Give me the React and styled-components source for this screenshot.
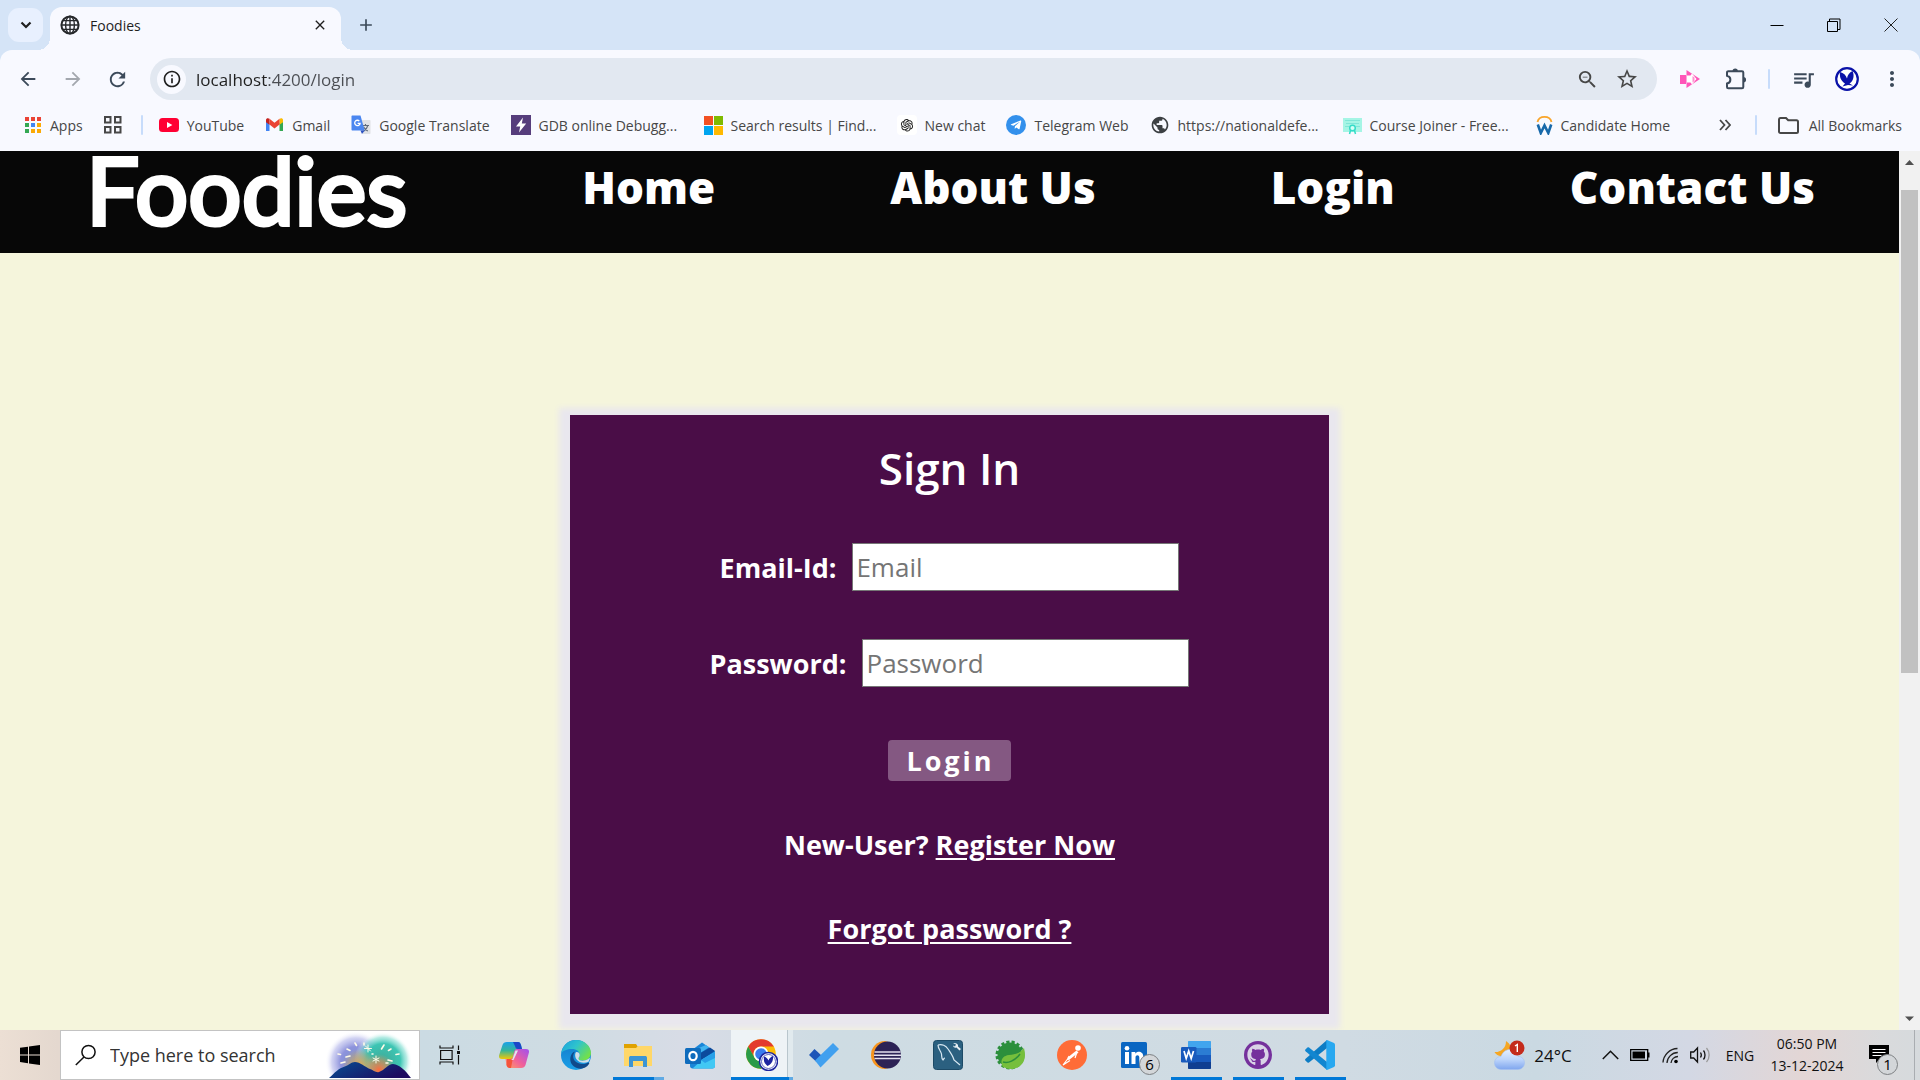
import React from "react";
import styled, { createGlobalStyle, css } from "styled-components";
import { AiOutlineOpenAI } from "react-icons/ai";
import { FaGithub, FaTelegramPlane } from "react-icons/fa";
import {
  MdArrowBack,
  MdArrowForward,
  MdRefresh,
  MdInfoOutline,
  MdZoomOut,
  MdStarOutline,
  MdQueueMusic,
  MdMoreVert,
  MdPublic,
  MdAdd,
  MdClose,
} from "react-icons/md";

const ui = `"Open Sans", "Noto Sans", sans-serif`;

const GlobalStyle = createGlobalStyle`
  *, *::before, *::after { box-sizing: border-box; }
  body { margin: 0; font-family: ${ui}; overflow: hidden; }
  button, input { font-family: inherit; }
  button { border: 0; padding: 0; background: none; color: inherit; }
  svg { display: block; flex: none; }
`;

/* ---------- browser frame ---------- */

const Screen = styled.div`
  display: flex;
  flex-direction: column;
  height: 100vh;
`;

const TabStrip = styled.header`
  display: flex;
  height: 50px;
  padding-left: 8px;
  background: #d5e4f7;
  color: #1f1f1f;
`;

const TabSearch = styled.button`
  display: grid;
  place-items: center;
  width: 35px;
  height: 34px;
  margin: 8px 7px 0 0;
  border-radius: 11px;
  background: #e8f0fe;
`;

const Tab = styled.div`
  position: relative;
  display: flex;
  align-items: center;
  gap: 10px;
  width: 291px;
  margin-top: 7px;
  padding: 0 12px 7px 10px;
  border-radius: 12px 12px 0 0;
  background: #f8f9ff;
  font-size: 14px;

  &::before,
  &::after {
    content: "";
    position: absolute;
    bottom: 0;
    width: 12px;
    height: 12px;
  }
  &::before {
    right: 100%;
    background: radial-gradient(circle at 0 0, transparent 12px, #f8f9ff 12px);
  }
  &::after {
    left: 100%;
    background: radial-gradient(circle at 100% 0, transparent 12px, #f8f9ff 12px);
  }
`;

const TabTitle = styled.span`
  flex: 1;
`;

const PlainButton = styled.button`
  display: grid;
  place-items: center;
  width: ${(p) => p.$w || 18}px;
  height: ${(p) => p.$h || 18}px;
  color: ${(p) => p.$color || "#3c4a5a"};
`;

const WindowControls = styled.div`
  display: flex;
  margin-left: auto;
  padding-right: 1px;
`;

const ToolbarWrap = styled.div`
  background: #d5e4f7;
`;

const Toolbar = styled.div`
  display: flex;
  align-items: center;
  height: 58px;
  padding: 0 5px;
  border-radius: 12px 12px 0 0;
  background: #f8f9ff;
`;

const Omnibox = styled.div`
  flex: 1;
  display: flex;
  align-items: center;
  height: 42px;
  margin: 0 10px;
  padding: 0 10px 0 7px;
  border-radius: 21px;
  background: #e2e8f1;
`;

const SiteInfo = styled.button`
  display: grid;
  place-items: center;
  width: 29px;
  height: 29px;
  margin-right: 10px;
  border-radius: 50%;
  background: #f8f9ff;
  color: #1f1f1f;
`;

const UrlInput = styled.input`
  flex: 1;
  min-width: 0;
  height: 30px;
  padding: 0;
  border: 0;
  outline: 0;
  font-size: 17px;
  background: linear-gradient(90deg, #1f1f1f 72px, #4a4d52 72px);
  background-clip: text;
  -webkit-background-clip: text;
  color: transparent;
`;

const Divider = styled.span`
  width: 2px;
  height: 20px;
  margin: ${(p) => p.$m || "0"};
  border-radius: 1px;
  background: #c7dcfb;
`;

const BookmarkBar = styled.nav`
  display: flex;
  align-items: center;
  height: 43px;
  padding: 0 18px 9px 24px;
  background: #f8f9ff;
  color: #474747;
  font-size: 14px;
  white-space: nowrap;
`;

const Bookmark = styled.a`
  display: flex;
  align-items: center;
  gap: 8px;
  margin-right: 21px;
  color: inherit;
  text-decoration: none;
  ${(p) => p.$wide && css`width: 172px;`}
`;

const BarEnd = styled.div`
  display: flex;
  align-items: center;
  gap: 21px;
  margin-left: auto;
`;

const FolderButton = styled.button`
  display: flex;
  align-items: center;
  gap: 10px;
  font-size: 14px;
`;

/* ---------- page ---------- */

const Viewport = styled.div`
  flex: 1;
  min-height: 0;
  display: flex;
`;

const Page = styled.div`
  flex: 1;
  min-width: 0;
  overflow: hidden;
  background: #f5f5dc;
`;

const SiteHeader = styled.header`
  display: flex;
  justify-content: space-between;
  align-items: flex-start;
  height: 102px;
  padding: 0 84px 0 86px;
  background: #070707;
  color: #fff;
`;

const Brand = styled.div`
  font-family: "Comic Sans MS", Lato, sans-serif;
  font-size: 94px;
  line-height: 76px;
  -webkit-text-stroke: 4px #fff;
  stroke-linejoin: round;
`;

const NavLink = styled.a`
  padding-top: 3px;
  color: #fff;
  font-size: 44px;
  font-weight: 800;
  line-height: 66px;
  text-decoration: none;
`;

const Card = styled.main`
  width: 40%;
  margin: 162px auto 0;
  padding: 25px 0 65px;
  background: #4a0d47;
  box-shadow: 0 4px 6px 11px #e9e7ee;
  color: #fff;
  text-align: center;
`;

const Title = styled.h1`
  margin: 0 0 47px;
  font-size: 44px;
  font-weight: 600;
  line-height: 56px;
`;

const Form = styled.form`
  display: flex;
  flex-direction: column;
  align-items: center;
  gap: 48px;
  font-size: 27px;
  font-weight: 700;
`;

const Field = styled.div`
  display: flex;
  align-items: center;
  gap: 16px;
`;

const TextBox = styled.input`
  width: 327px;
  height: 48px;
  padding: 1px 3px;
  border: 1px solid #767676;
  border-radius: 0;
  background: #fff;
  font-size: 26px;

  &::placeholder {
    color: #757575;
    opacity: 1;
  }
`;

const SubmitButton = styled.button`
  height: 41px;
  margin: 5px 0 0;
  padding: 0 16px 0 18px;
  border-radius: 4px;
  background: #845882;
  color: #fff;
  font-size: 27px;
  font-weight: 700;
  letter-spacing: 3px;
`;

const Note = styled.p`
  margin: 44px 0 0;
  font-size: 27px;
  font-weight: 700;
  line-height: 40px;

  a {
    color: #fff;
    text-decoration-thickness: 2px;
    text-underline-offset: 3px;
  }
`;

const Scrollbar = styled.div`
  display: flex;
  flex-direction: column;
  align-items: center;
  width: 21px;
  background: #f1f1f1;
`;

const Track = styled.div`
  flex: 1;
  width: 17px;
  display: flex;
  flex-direction: column;
  padding-top: 18px;
`;

const Thumb = styled.div`
  height: 59%;
  background: #c1c1c1;
`;

/* ---------- taskbar ---------- */

const Taskbar = styled.footer`
  display: flex;
  align-items: stretch;
  height: 50px;
  background: linear-gradient(
    90deg,
    #ecdfd4 0%,
    #e4d8cf 3%,
    #cbdbe3 22%,
    #cfdce3 30%,
    #d8dce6 36%,
    #cedce3 43%,
    #d0dbe3 70%,
    #cad9e2 80%,
    #d3d8e4 88%,
    #e3d6d5 94%,
    #d9dadc 98%,
    #d6dadd 100%
  );
  color: #101010;
`;

const StartButton = styled.button`
  display: grid;
  place-items: center;
  width: 60px;
`;

const SearchBox = styled.label`
  display: flex;
  align-items: center;
  width: 360px;
  padding: 0 5px 0 14px;
  border: 1px solid #c3c3c3;
  background: #fff;
`;

const SearchInput = styled.input`
  flex: 1;
  min-width: 0;
  margin-left: 13px;
  padding: 0;
  border: 0;
  outline: 0;
  font-size: 18px;

  &::placeholder {
    color: #333;
    opacity: 1;
  }
`;

const Apps = styled.div`
  display: flex;
  margin-left: 3px;
`;

const AppButton = styled.button`
  position: relative;
  display: grid;
  place-items: center;
  width: 62px;
  ${(p) =>
    p.$active &&
    css`
      background: linear-gradient(90deg, #eef3f6 56px, #b9c6cd 56px, #b9c6cd 57px, #e1eaee 57px);
    `}
  ${(p) =>
    p.$running &&
    css`
      &::after {
        content: "";
        position: absolute;
        bottom: 0;
        left: ${p.$active ? 0 : 6}px;
        right: ${p.$active ? 0 : 5}px;
        height: 3px;
        background: ${p.$stacked
          ? "linear-gradient(270deg, #60aae4 " + (p.$active ? 4 : 10) + "px, #0078d7 0)"
          : "#0078d7"};
      }
    `}
`;

const Badge = styled.span`
  position: absolute;
  right: ${(p) => p.$right || 5}px;
  bottom: 5px;
  width: 21px;
  height: 21px;
  border: 1px solid #7d8083;
  border-radius: 50%;
  background: #d3d6d9;
  color: #000;
  font-size: 15px;
  line-height: 19px;
  text-align: center;
`;

const Tray = styled.div`
  display: flex;
  align-items: stretch;
  margin-left: auto;
`;

const TrayButton = styled.button`
  position: relative;
  display: flex;
  align-items: center;
  justify-content: center;
  gap: 8px;
  width: ${(p) => p.$w}px;
  font-size: ${(p) => p.$size || 15}px;
`;

const Clock = styled.button`
  width: 84px;
  font-size: 14px;
  line-height: 22px;
  text-align: center;
  white-space: nowrap;
`;

const ShowDesktop = styled.button`
  width: 6px;
  border-left: 1px solid #a9adb1;
`;

/* ---------- icons ---------- */

const ChevronDownIcon = () => (
  <svg width="12" height="8" viewBox="0 0 12 8" fill="none" stroke="#1f1f1f" strokeWidth="2.200">
    <path d="M1.500 1.500L6 6l4.500-4.500" />
  </svg>
);

const GlobeIcon = () => (
  <svg width="20" height="20" viewBox="0 0 20 20" fill="none" stroke="#26282b" strokeWidth="1.4">
    <circle cx="10" cy="10" r="8.6" strokeWidth="2" />
    <ellipse cx="10" cy="10" rx="4.400" ry="8.800" />
    <path d="M10 1v18M1 10h18M2.500 5.600h15M2.500 14.400h15" />
  </svg>
);

const AppsIcon = () => {
  const colors = ["#ea4335", "#ea4335", "#ea4335", "#34a853", "#4285f4", "#fbaa05", "#34a853", "#fbaa05", "#fbaa05"];
  return (
    <svg width="18" height="18" viewBox="0 0 18 18">
      {colors.map((c, i) => (
        <rect key={i} x={1 + (i % 3) * 6} y={1 + Math.floor(i / 3) * 6} width="4" height="4" fill={c} />
      ))}
    </svg>
  );
};

const GridIcon = () => (
  <svg width="18" height="18" viewBox="0 0 18 18" fill="none" stroke="#474747" strokeWidth="2">
    <path d="M1 1h5.500v5.500H1zM11 1h5.500v5.500H11zM1 11h5.500v5.500H1zM11 11h5.500v5.500H11z" />
  </svg>
);

const YouTubeIcon = () => (
  <svg width="20" height="20" viewBox="0 0 20 20">
    <rect y="3" width="20" height="14" rx="3.500" fill="#f03" />
    <path d="M8 7l5.400 3L8 13z" fill="#fff" />
  </svg>
);

const GmailIcon = () => (
  <svg width="19" height="20" viewBox="0 0 19 20">
    <path d="M1 5v11h3.500V8z" fill="#4285f4" />
    <path d="M18 5v11h-3.500V8z" fill="#34a853" />
    <path d="M1 5c0-1.700 2-2.400 3.500-1.200v6L1 7.200z" fill="#c5221f" />
    <path d="M18 5c0-1.700-2-2.400-3.500-1.200v6L18 7.200z" fill="#fbbc04" />
    <path d="M4.500 3.800l5 4 5-4v5.600l-5 4-5-4z" fill="#ea4335" />
  </svg>
);

const TranslateIcon = () => (
  <svg width="20" height="20" viewBox="0 0 20 20">
    <path d="M8 5h10.500c.6 0 1 .4 1 1v12c0 .6-.4 1-1 1H12z" fill="#dfe1e5" />
    <path d="M11 10.500h7M14.500 9v1.500M16.800 10.500c-.6 2.500-2.300 4.500-4 5.500M12.500 11.800c.8 1.800 2.300 3.200 4.300 4.200" stroke="#5f6b7a" strokeWidth="1.100" fill="none" />
    <path d="M1.500.5h8l4.200 15H1.500c-.6 0-1-.4-1-1v-13c0-.6.400-1 1-1z" fill="#4a86f0" />
    <path d="M9.500 15.500h4.200L11 19z" fill="#2b50c0" />
    <path d="M8.300 6a2.700 2.700 0 1 0 .8 2.300H6.600" stroke="#fff" strokeWidth="1.300" fill="none" />
  </svg>
);

const GdbIcon = () => (
  <svg width="20" height="20" viewBox="0 0 20 20">
    <path d="M0 0h20v20H0z" fill="#563d7c" />
    <path d="M12 2.500L5 11.500h4.200L8 17.500l7.200-9h-4.400z" fill="#fff" />
  </svg>
);

const MicrosoftIcon = () => (
  <svg width="19" height="19" viewBox="0 0 19 19">
    <path d="M0 0h9v9H0z" fill="#f25022" />
    <path d="M10 0h9v9h-9z" fill="#7fba00" />
    <path d="M0 10h9v9H0z" fill="#00a4ef" />
    <path d="M10 10h9v9h-9z" fill="#ffb900" />
  </svg>
);

const Disc = styled.span`
  display: grid;
  place-items: center;
  width: 20px;
  height: 20px;
  border-radius: ${(p) => (p.$square ? 4 : 10)}px;
  background: ${(p) => p.$bg};
  color: ${(p) => p.$fg};
`;

const CertificateIcon = () => (
  <svg width="19" height="19" viewBox="0 0 19 19">
    <path d="M0 2h19v14H0z" fill="#a5f5e5" />
    <path d="M2 4.500h15M3 7.500h13M2 10.500h4M13 10.500h4" stroke="#7fe6d8" />
    <circle cx="9.500" cy="12" r="2.800" fill="#d5fff6" stroke="#35dcc8" strokeWidth="1.500" />
    <path d="M7.500 14.500L6.500 18M11.500 14.500l1 3.500" stroke="#35dcc8" strokeWidth="1.500" />
  </svg>
);

const CandidateIcon = () => (
  <svg width="17" height="20" viewBox="0 0 17 20" fill="none">
    <path d="M1.500 7C3 .2 14 .2 15.500 7" stroke="#f9a52b" strokeWidth="1.800" />
    <path d="M1.800 9.500l3 8.500L8.500 10.500l3.800 7.500L15.200 9.500" stroke="#1769aa" strokeWidth="2.600" />
  </svg>
);

const MoreIcon = () => (
  <svg width="12" height="12" viewBox="0 0 12 12" fill="none" stroke="#474747" strokeWidth="1.800">
    <path d="M1 1l4.500 5L1 11M6.500 1L11 6l-4.500 5" />
  </svg>
);

const FolderIcon = () => (
  <svg width="21" height="17" viewBox="0 0 21 17" fill="none" stroke="#474747" strokeWidth="2">
    <path d="M1 14.500V2.500C1 1.700 1.600 1 2.500 1H8l2.200 2.300h8.300c.9 0 1.500.7 1.500 1.500v9.700c0 .8-.6 1.500-1.500 1.500h-16C1.600 16 1 15.300 1 14.500z" />
  </svg>
);

const PuzzleIcon = () => (
  <svg width="22" height="22" viewBox="0 0 22 22">
    <path
      d="M2 7.800V4.500c0-.8.600-1.300 1.300-1.300H17c.7 0 1.300.5 1.300 1.300V19c0 .8-.6 1.300-1.300 1.300H3.300C2.600 20.300 2 19.800 2 19v-3.500c4.500-1 4.500-6.700 0-7.700z"
      fill="none"
      stroke="#3c4a5a"
      strokeWidth="2"
    />
    <path d="M7.500 3.200a2.700 2.700 0 0 1 5.400 0zM18.300 9a2.700 2.700 0 0 1 0 5.500z" fill="#3c4a5a" />
  </svg>
);

const ArrowExtensionIcon = () => (
  <svg width="22" height="22" viewBox="0 0 22 22">
    <path d="M7.500 2L21 11 7.500 20z" fill="#ff55b8" />
    <path d="M1 7h6v9H1z" fill="#ff55b8" />
    <path d="M8 7.500h3.500l1.500-2 4.500 5.500-4.500 5.500-1.500-2H8z" fill="#fff" />
    <path d="M13.500 8v6.500l2-1.500V9.500z" fill="#ff8fd0" />
  </svg>
);

const AvatarIcon = () => (
  <svg width="24" height="24" viewBox="0 0 24 24">
    <circle cx="12" cy="12" r="10.800" fill="#fff" stroke="#0a12a8" strokeWidth="2.200" />
    <path d="M5 5c3.500 1 6 3 7 6.500C12.500 8 14.500 5.500 17.500 4c2.200 4.500 1 10-3 12.500l3.500 2-5-.5-5.500 1.500 2.500-3C6 14 4.300 10 5 5z" fill="#0a12a8" />
  </svg>
);

const MinimizeIcon = () => (
  <svg width="14" height="14" viewBox="0 0 14 14" stroke="#000">
    <path d="M.5 7.500h13" />
  </svg>
);
const RestoreIcon = () => (
  <svg width="14" height="14" viewBox="0 0 14 14" stroke="#000" fill="none">
    <path d="M.5 3.500h10v10H.5zM2.500 3.500v-2.500h10.500v10.500h-2.500" />
  </svg>
);
const CloseIcon = () => (
  <svg width="14" height="14" viewBox="0 0 14 14" stroke="#222" fill="none">
    <path d="M.5.5l13 13M13.500.5l-13 13" />
  </svg>
);

const ScrollArrow = ({ down }) => (
  <svg width="21" height="21" viewBox="0 0 21 21">
    <path d={down ? "M6 7.500h9L10.500 12z" : "M6 14h9l-4.500-5z"} fill="#505050" />
  </svg>
);

const WindowsIcon = () => (
  <svg width="20" height="20" viewBox="0 0 20 20">
    <path d="M0 2.800l8-1.100v7.700H0zM9 1.500L20 0v9.400H9zM0 10.400h8v7.800l-8-1.100zM9 10.400h11V20L9 18.400z" />
  </svg>
);

const SearchIcon = () => (
  <svg width="22" height="22" viewBox="0 0 22 22" fill="none" stroke="#111" strokeWidth="1.500">
    <circle cx="13.500" cy="8" r="6.600" />
    <path d="M9 13L.8 21" />
  </svg>
);

const FireworksArt = () => (
  <svg width="88" height="46" viewBox="0 0 88 46">
    <defs>
      <radialGradient id="fwViolet">
        <stop offset="0" stopColor="#6f8fd0" />
        <stop offset=".5" stopColor="#8288d8" stopOpacity=".9" />
        <stop offset=".78" stopColor="#a5a8e6" stopOpacity=".5" />
        <stop offset="1" stopColor="#fff" stopOpacity="0" />
      </radialGradient>
      <radialGradient id="fwTeal">
        <stop offset="0" stopColor="#3fa896" />
        <stop offset=".6" stopColor="#34c3b0" stopOpacity=".95" />
        <stop offset=".82" stopColor="#7adccf" stopOpacity=".55" />
        <stop offset="1" stopColor="#fff" stopOpacity="0" />
      </radialGradient>
      <radialGradient id="fwGold">
        <stop offset="0" stopColor="#e8a848" />
        <stop offset=".6" stopColor="#c8a870" stopOpacity=".6" />
        <stop offset="1" stopColor="#c8a870" stopOpacity="0" />
      </radialGradient>
      <radialGradient id="fwEmber">
        <stop offset="0" stopColor="#ff6a3c" />
        <stop offset=".6" stopColor="#e09058" stopOpacity=".6" />
        <stop offset="1" stopColor="#c8a870" stopOpacity="0" />
      </radialGradient>
      <linearGradient id="fwHill" x2="1" y2=".4">
        <stop offset="0" stopColor="#065094" />
        <stop offset="1" stopColor="#1d0b60" />
      </linearGradient>
    </defs>
    <circle cx="30" cy="30" r="31" fill="url(#fwViolet)" />
    <circle cx="57" cy="29" r="29" fill="url(#fwTeal)" />
    <circle cx="33" cy="34" r="17" fill="url(#fwGold)" />
    <circle cx="53" cy="38" r="16" fill="url(#fwEmber)" />
    <g stroke="#fffbe8" strokeWidth="1.600" strokeLinecap="round">
      <path d="M29 11l1.500 2.500M38 13v-2M12 22l2.500.5M21 17l3 1.500M20 25l4-1M15 31l4-1M58 13l-2.500 4M65 17l-2.500 1.500M73 22l-3 .5M62 28l4 1M60 31h2M46 22h1" />
      <path d="M42 13v7M38.500 16.500h7M39.500 14l5 5M50 24v7M47 26l6 3M53 26l-6 3" strokeWidth="1" />
    </g>
    <path d="M3 46c7-6 8-9 17-12 3-1 5-4 9-4 5 0 10 5 15 7 3 1 6 4 9 3 6-2 9-8 14-8 7 1 12 6 18 14z" fill="url(#fwHill)" />
  </svg>
);

const TaskViewIcon = () => (
  <svg width="22" height="20" viewBox="0 0 22 20" fill="none" stroke="#111" strokeWidth="1.200">
    <path d="M1.600 5.500h11.500v9H1.600zM1 .5v2.500h13V.5M1 19.500V17h13v2.500M19.500.5V5M19.500 10v9.500" />
    <path d="M18 6h3v3h-3z" fill="#111" stroke="none" />
  </svg>
);

const CopilotIcon = () => (
  <svg width="30" height="28" viewBox="0 0 30 28">
    <defs>
      <linearGradient id="cpA" x2="0" y2="1">
        <stop offset="0" stopColor="#1aa0e8" />
        <stop offset=".5" stopColor="#35b59a" />
        <stop offset="1" stopColor="#f0c808" />
      </linearGradient>
      <linearGradient id="cpB" x1="1" y1="0" x2="0" y2="1">
        <stop offset="0" stopColor="#a050f0" />
        <stop offset=".55" stopColor="#f0609a" />
        <stop offset="1" stopColor="#ffa060" />
      </linearGradient>
    </defs>
    <path d="M8 1h11c2 0 2.500 1.500 3 3l1 4h-4c-2 0-3 1-3.500 3l-1.300 5c-.5 1.500-1.200 2-3.200 2H3c-2.500 0-3.500-1.500-2.800-4L3.500 4C4.200 2 5.500 1 8 1z" fill="url(#cpA)" />
    <path d="M14 1h5c2 0 2.500 1.500 3 3l1 4h-4c-2 0-2.500-1-3-3z" fill="#1b47c8" />
    <path d="M22 27H11c-2 0-3-1-3.500-3L6.500 18h4.300c2 0 2.700-.7 3.200-2.500L15.500 10c.5-1.500 1.200-2 3.500-2h8c2.500 0 3.500 1.500 2.800 4l-3.300 12c-.7 2-2 3-4.500 3z" fill="url(#cpB)" />
    <path d="M8 18h3c2 0 2.700-.7 3.200-2.500L12 27h-1c-2 0-3-1-3.500-3z" fill="#f4543c" />
    <path d="M16.500 9.500h2.500L14.500 19h-3c1.500 0 2-1 2.500-2.500z" fill="#dfe8ee" />
  </svg>
);

const EdgeIcon = () => (
  <svg width="30" height="30" viewBox="0 0 30 30">
    <defs>
      <linearGradient id="edA" x2="1" y2=".6">
        <stop offset="0" stopColor="#1a9fe0" />
        <stop offset=".5" stopColor="#2fc4cc" />
        <stop offset="1" stopColor="#72e04c" />
      </linearGradient>
      <linearGradient id="edB" x2="0" y2="1">
        <stop offset="0" stopColor="#1478c8" />
        <stop offset="1" stopColor="#1aa0e8" />
      </linearGradient>
    </defs>
    <circle cx="15" cy="15" r="15" fill="url(#edB)" />
    <path d="M.2 13.500C1.500 5 7.500 0 15 0c8.500 0 15 6 15 13 0 4.500-3.500 7.500-8 7.500-3 0-4.800-1-4.500-2.300.2-.9 1.200-1.400 1.200-3.500 0-3.300-3.300-5.700-7.700-5.700-5 0-9 1.500-10.800 4.500z" fill="url(#edA)" />
    <path d="M14 11.500c-3 4-2.500 9 3 11.500 4 1.800 8 1 10.500-.5 1 0 1 .8.300 1.800C25 28.500 20 29.500 16 28c-5-2-7.500-6-6.500-11 .5-2.500 2-4.800 4.500-5.500z" fill="#114a8b" />
    <path d="M15.500 12c2 0 3.200 1.300 3.200 3 0 1.800-1.200 2.300-1.200 3.500 0 2 3.500 2.800 7 1.800 1.500-.4 3-1.300 4.500-2.500-.3 1.500-.7 2.800-1.500 4-3.500 1.700-9.500 1.500-12-2.500-2-3-1.500-7 0-7.300z" fill="#d2dfe7" />
  </svg>
);

const ExplorerIcon = () => (
  <svg width="28" height="24" viewBox="0 0 28 24">
    <path d="M0 1h12l2 3v4H0z" fill="#e0a200" />
    <path d="M0 5h12l2-2h14v20H0z" fill="#ffd768" />
    <path d="M5 24V15c0-1.500.8-2 2-2h14c1.200 0 2 .5 2 2v9h-4v-6h-10v6z" fill="#3d95d4" />
  </svg>
);

const OutlookIcon = () => (
  <svg width="30" height="27" viewBox="0 0 30 27">
    <path d="M5 9.500L17 .5l13 9V24c0 1.500-1 2.500-2.500 2.500H7.500C6 26.500 5 25.500 5 24z" fill="#1a86d8" />
    <path d="M9 8l12-5 3 2.200L12 13z" fill="#42b4f0" />
    <path d="M12 13L25 5.500l5 3.500-14 9z" fill="#0c4a9c" />
    <path d="M30 10v14c0 1.500-1 2.500-2.500 2.500H7.500L18 17z" fill="#42c8f4" />
    <path d="M30 10v6l-10 5-4-3z" fill="#28a0e8" />
    <rect y="6" width="16" height="16" rx="1.500" fill="#0f6cbd" />
    <ellipse cx="8" cy="14" rx="3.700" ry="4.200" fill="none" stroke="#fff" strokeWidth="2.200" />
  </svg>
);

const ChromeIcon = () => (
  <svg width="32" height="32" viewBox="0 0 32 32">
    <circle cx="15" cy="15" r="14.800" fill="#fbbc04" />
    <path d="M2.200 7.500A14.800 14.800 0 0 1 27.800 7.500H15A7.500 7.500 0 0 0 8.500 18.800z" fill="#e33b2e" />
    <path d="M2.200 7.500L8.600 18.700A7.500 7.500 0 0 0 21 19.500L15 29.800A14.800 14.800 0 0 1 2.200 7.500z" fill="#2a9b48" />
    <circle cx="15" cy="15" r="7.500" fill="#fff" />
    <circle cx="15" cy="15" r="5.800" fill="#3b7ded" />
    <circle cx="22.500" cy="22.500" r="9" fill="#fff" stroke="#1d25a0" strokeWidth="1.500" />
    <circle cx="22.500" cy="22.500" r="7" fill="none" stroke="#3a42b0" strokeWidth=".8" />
    <path d="M18 17.500c2 .5 3.500 2 4.500 4 .7-2 2-3.500 4.500-4.500.5 4-1 7-3 8.500l-2.500 1.500-1.500-1.500c-2-1.500-2.500-4.500-2-8z" fill="#1d25a0" />
  </svg>
);

const TodoIcon = () => (
  <svg width="30" height="26" viewBox="0 0 30 26">
    <path d="M0 13l5.500-6 7 6.500-5 6.500z" fill="#1e55b8" />
    <path d="M6 18.500L24 1l6 6-18.500 18.500z" fill="#41a0ef" />
  </svg>
);

const EclipseIcon = () => (
  <svg width="30" height="28" viewBox="0 0 30 28">
    <path d="M14 0a14 14 0 0 0 0 28l3-1V1z" fill="#f7941e" />
    <circle cx="16.500" cy="14" r="13.500" fill="#2c2255" />
    <path d="M3.500 11h26M3 14.300h27M3.500 17.500h26" stroke="#e4e0ee" strokeWidth="1.600" />
  </svg>
);

const MysqlIcon = () => (
  <svg width="30" height="30" viewBox="0 0 30 30" fill="none">
    <rect x=".5" y=".5" width="29" height="29" rx="3" fill="#2b6080" stroke="#1d4a66" />
    <path d="M5 5c4-1.500 8 1 10 4 3 4.500 5 7 6 11l6 5M5 5c0 4 3 6 3.500 9 .3 3 0 5 1.500 6 1-1 .8-2 2-2" stroke="#d8e8f2" strokeWidth="1.200" />
    <path d="M20 3l3 1.500-1 2-2-1c.5 2 2 2.500 3.500 2l3 3 1.500-1.500-3-2.500c.5-2-1-3.500-5-3.500z" fill="#e8f0f4" />
  </svg>
);

const SpringIcon = () => (
  <svg width="30" height="30" viewBox="0 0 30 30">
    <circle cx="15" cy="15" r="12.500" fill="none" stroke="#2c8f3c" strokeWidth="4" strokeDasharray="3 2" />
    <circle cx="15" cy="15" r="12.500" fill="#2c8f3c" />
    <path d="M29 8c2 8 1 14-4 18-5 3.500-11 4-17 1C5 22 6 16 14 15c7-.5 11-2 15-7z" fill="#76bf3c" />
    <path d="M8 22c5 1.500 12-1 17-8" stroke="#2c8f3c" strokeWidth="1.500" fill="none" />
  </svg>
);

const PostmanIcon = () => (
  <svg width="30" height="30" viewBox="0 0 30 30">
    <circle cx="15" cy="15" r="15" fill="#ff6c37" />
    <circle cx="21" cy="8" r="2.800" fill="#fff" />
    <path d="M19.500 10.500L10 18l2 2 9.500-7.500z" fill="#fff" />
    <path d="M11 18.500L6 25l7-4.500M12 16l-1 4M20 12l-2 6" stroke="#fff" strokeWidth="1.200" fill="none" />
  </svg>
);

const LinkedInIcon = () => (
  <svg width="26" height="26" viewBox="0 0 26 26" fill="#fff">
    <rect width="26" height="26" rx="1.500" fill="#0a66c2" />
    <circle cx="6" cy="6.300" r="2.300" />
    <path d="M4 10h4v12H4zM10.500 10h3.800v1.700c2-3 8-2.700 8 3V22h-4v-6.500c0-3-3.800-2.800-3.800 0V22h-4z" />
  </svg>
);

const WordIcon = () => (
  <svg width="30" height="28" viewBox="0 0 30 28">
    <path d="M7 1c0-.6.400-1 1-1h21c.6 0 1 .4 1 1v6H7z" fill="#41a5ee" />
    <path d="M7 7h23v7H7z" fill="#2b7cd3" />
    <path d="M7 14h23v7H7z" fill="#185abd" />
    <path d="M7 21h23v6c0 .6-.4 1-1 1H8c-.6 0-1-.4-1-1z" fill="#103f91" />
    <rect x="0" y="6" width="15.500" height="15.500" rx="1.300" fill="#185abd" />
    <path d="M3 10l2.200 7.500L7.700 10l2.500 7.500L12.500 10" stroke="#fff" strokeWidth="1.700" fill="none" />
  </svg>
);

const GithubDisc = styled.span`
  display: grid;
  place-items: center;
  width: 28px;
  height: 28px;
  border-radius: 50%;
  background: #75309c;
  color: #d9d3e6;
`;

const VscodeIcon = () => (
  <svg width="30" height="30" viewBox="0 0 30 30">
    <path d="M22 0v8L4 22.500c-.6.400-1 .4-1.500 0L.6 20.800c-.7-.7-.7-1.300 0-2z" fill="#0d7cc4" />
    <path d="M22 30v-8L4 7.500c-.6-.4-1-.4-1.500 0L.6 9.200c-.7.700-.7 1.300 0 2z" fill="#1286d0" />
    <path d="M22 0l7 3c.7.400 1 1 1 1.700v20.600c0 .7-.3 1.300-1 1.700l-7 3c-.5-.3-.7-.8-.7-1.500v-27c0-.7.200-1.200.7-1.500z" fill="#28a8f0" />
  </svg>
);

const WeatherIcon = () => (
  <svg width="32" height="30" viewBox="0 0 32 30">
    <defs>
      <linearGradient id="cloud" x2="0" y2="1">
        <stop offset="0" stopColor="#e6f0ff" />
        <stop offset=".5" stopColor="#bdd5fb" />
        <stop offset="1" stopColor="#7fa6ee" />
      </linearGradient>
    </defs>
    <path d="M12 1c1.500 1 4 3 5 6l-3 5-7 4c-2.500 0-5-1.500-6.500-4C6 12.500 12 9 12 1z" fill="#f5a623" />
    <path d="M7.500 29.500c-4 0-7-2.800-7-6.500s2.800-6.500 6.500-6.500C8.500 12 12 9.500 16 9.500c4.500 0 7.500 3 8 7 4 0 6.500 2.800 6.500 6.300 0 4-3 6.700-7 6.700z" fill="url(#cloud)" stroke="#a3c0f2" strokeWidth=".6" />
    <circle cx="23" cy="8" r="7.500" fill="#c42b1c" />
    <path d="M21 6l2.300-1.500V12" stroke="#fff" strokeWidth="1.400" fill="none" />
  </svg>
);

const ChevronUpIcon = () => (
  <svg width="17" height="10" viewBox="0 0 17 10" fill="none" stroke="#111" strokeWidth="1.500">
    <path d="M.8 9l7.700-7.700L16.200 9" />
  </svg>
);
const BatteryIcon = () => (
  <svg width="20" height="12" viewBox="0 0 20 12">
    <path d="M.7.700h17v10.600H.7z" fill="none" stroke="#000" strokeWidth="1.300" />
    <path d="M2.500 2.500h12.500v7H2.500zM18 3.500h1.500v5H18z" />
  </svg>
);
const WifiIcon = () => (
  <svg width="17" height="17" viewBox="0 0 17 17" fill="none" stroke="#222" strokeWidth="1.300">
    <path d="M1 15.500A15 15 0 0 1 15.500 1.500M5 16A11 11 0 0 1 15.800 5.500M9 16a7 7 0 0 1 7-6.500" />
    <circle cx="14" cy="14.500" r="1.800" fill="#000" stroke="none" />
  </svg>
);
const VolumeIcon = () => (
  <svg width="21" height="18" viewBox="0 0 21 18" fill="none" stroke="#111" strokeWidth="1.300">
    <path d="M.7 6h3L7.500 2v14l-3.800-4h-3z" />
    <path d="M10.500 6.500c1 1.500 1 3.500 0 5M13.500 4.500c2 2.500 2 6.500 0 9" />
    <path d="M16.500 2c3.500 4 3.500 10 0 14" stroke="#999" />
  </svg>
);
const NotificationIcon = () => (
  <svg width="26" height="24" viewBox="0 0 26 24">
    <path d="M0 2h20v14h-9l-4 4v-4H0z" />
    <path d="M3.500 6.500h13M3.500 9.500h13M3.500 12.500h9" stroke="#fff" strokeWidth="1.200" />
  </svg>
);

/* ---------- data ---------- */

const bookmarks = [
  { label: "YouTube", icon: <YouTubeIcon /> },
  { label: "Gmail", icon: <GmailIcon /> },
  { label: "Google Translate", icon: <TranslateIcon /> },
  { label: "GDB online Debugg...", icon: <GdbIcon />, wide: true },
  { label: "Search results | Find...", icon: <MicrosoftIcon />, wide: true },
  { label: "New chat", icon: <Disc $square $bg="#fff" $fg="#222"><AiOutlineOpenAI size={16} /></Disc> },
  { label: "Telegram Web", icon: <Disc $bg="#3390ec" $fg="#fff"><FaTelegramPlane size={12} /></Disc> },
  { label: "https://nationaldefe...", icon: <MdPublic size={20} color="#3c4043" />, wide: true },
  { label: "Course Joiner - Free...", icon: <CertificateIcon />, wide: true },
  { label: "Candidate Home", icon: <CandidateIcon /> },
];

const apps = [
  { name: "Copilot", icon: <CopilotIcon /> },
  { name: "Edge", icon: <EdgeIcon /> },
  { name: "File Explorer", icon: <ExplorerIcon />, running: true, stacked: true },
  { name: "Outlook", icon: <OutlookIcon /> },
  { name: "Chrome", icon: <ChromeIcon />, running: true, stacked: true, active: true },
  { name: "To Do", icon: <TodoIcon /> },
  { name: "Eclipse", icon: <EclipseIcon /> },
  { name: "MySQL Workbench", icon: <MysqlIcon /> },
  { name: "Spring Tools", icon: <SpringIcon /> },
  { name: "Postman", icon: <PostmanIcon /> },
  { name: "LinkedIn", icon: <LinkedInIcon />, badge: 6 },
  { name: "Word", icon: <WordIcon />, running: true },
  { name: "GitHub Desktop", icon: <GithubDisc><FaGithub size={22} /></GithubDisc>, running: true },
  { name: "Visual Studio Code", icon: <VscodeIcon />, running: true },
];

export default function App() {
  return (
    <Screen>
      <GlobalStyle />
      <TabStrip>
        <TabSearch aria-label="Search tabs"><ChevronDownIcon /></TabSearch>
        <Tab>
          <GlobeIcon />
          <TabTitle>Foodies</TabTitle>
          <PlainButton $color="#1f1f1f" aria-label="Close tab"><MdClose size={16} /></PlainButton>
        </Tab>
        <PlainButton $w={49} $h={50} aria-label="New tab"><MdAdd size={20} /></PlainButton>
        <WindowControls>
          <PlainButton $w={57} $h={50} aria-label="Minimize"><MinimizeIcon /></PlainButton>
          <PlainButton $w={57} $h={50} aria-label="Restore"><RestoreIcon /></PlainButton>
          <PlainButton $w={57} $h={50} aria-label="Close"><CloseIcon /></PlainButton>
        </WindowControls>
      </TabStrip>
      <ToolbarWrap>
        <Toolbar>
          <PlainButton $w={45} $h={40} aria-label="Back"><MdArrowBack size={22} /></PlainButton>
          <PlainButton $w={45} $h={40} $color="#a3a7ae" aria-label="Forward"><MdArrowForward size={22} /></PlainButton>
          <PlainButton $w={45} $h={40} aria-label="Reload"><MdRefresh size={23} /></PlainButton>
          <Omnibox>
            <SiteInfo aria-label="Site information"><MdInfoOutline size={20} /></SiteInfo>
            <UrlInput aria-label="Address" defaultValue="localhost:4200/login" />
            <PlainButton $w={40} $h={40} $color="#474747" aria-label="Zoom"><MdZoomOut size={23} /></PlainButton>
            <PlainButton $w={40} $h={40} $color="#474747" aria-label="Bookmark this page"><MdStarOutline size={24} /></PlainButton>
          </Omnibox>
          <PlainButton $w={46} $h={40} aria-label="Screen recorder"><ArrowExtensionIcon /></PlainButton>
          <PlainButton $w={46} $h={40} aria-label="Extensions"><PuzzleIcon /></PlainButton>
          <Divider $m="0 11px 0 9px" />
          <PlainButton $w={44} $h={40} aria-label="Media"><MdQueueMusic size={25} /></PlainButton>
          <PlainButton $w={44} $h={40} aria-label="Profile"><AvatarIcon /></PlainButton>
          <PlainButton $w={46} $h={40} aria-label="Menu"><MdMoreVert size={24} /></PlainButton>
        </Toolbar>
      </ToolbarWrap>
      <BookmarkBar aria-label="Bookmarks">
        <Bookmark href="#apps"><AppsIcon />Apps</Bookmark>
        <PlainButton aria-label="Tab groups"><GridIcon /></PlainButton>
        <Divider $m="0 16px 0 19px" />
        {bookmarks.map((b) => (
          <Bookmark key={b.label} href="#bookmark" $wide={b.wide}>{b.icon}{b.label}</Bookmark>
        ))}
        <BarEnd>
          <PlainButton aria-label="More bookmarks"><MoreIcon /></PlainButton>
          <Divider />
          <FolderButton><FolderIcon />All Bookmarks</FolderButton>
        </BarEnd>
      </BookmarkBar>

      <Viewport>
        <Page>
          <SiteHeader>
            <Brand>Foodies</Brand>
            <NavLink href="#home">Home</NavLink>
            <NavLink href="#about">About Us</NavLink>
            <NavLink href="#login">Login</NavLink>
            <NavLink href="#contact">Contact Us</NavLink>
          </SiteHeader>
          <Card>
            <Title>Sign In</Title>
            <Form onSubmit={(e) => e.preventDefault()}>
              <Field>
                <label htmlFor="email">Email-Id:</label>
                <TextBox id="email" type="email" placeholder="Email" />
              </Field>
              <Field>
                <label htmlFor="password">Password:</label>
                <TextBox id="password" type="password" placeholder="Password" />
              </Field>
              <SubmitButton type="submit">Login</SubmitButton>
            </Form>
            <Note>New-User? <a href="#register">Register Now</a></Note>
            <Note><a href="#forgot">Forgot password ?</a></Note>
          </Card>
        </Page>
        <Scrollbar>
          <ScrollArrow />
          <Track><Thumb /></Track>
          <ScrollArrow down />
        </Scrollbar>
      </Viewport>

      <Taskbar>
        <StartButton aria-label="Start"><WindowsIcon /></StartButton>
        <SearchBox>
          <SearchIcon />
          <SearchInput aria-label="Search" placeholder="Type here to search" />
          <FireworksArt />
        </SearchBox>
        <StartButton aria-label="Task view"><TaskViewIcon /></StartButton>
        <Apps>
          {apps.map((a) => (
            <AppButton key={a.name} aria-label={a.name} $running={a.running} $stacked={a.stacked} $active={a.active}>
              {a.icon}
              {a.badge && <Badge>{a.badge}</Badge>}
            </AppButton>
          ))}
        </Apps>
        <Tray>
          <TrayButton $w={124} $size={17}><WeatherIcon />24°C</TrayButton>
          <TrayButton $w={30} aria-label="Show hidden icons"><ChevronUpIcon /></TrayButton>
          <TrayButton $w={30} aria-label="Battery"><BatteryIcon /></TrayButton>
          <TrayButton $w={30} aria-label="Network"><WifiIcon /></TrayButton>
          <TrayButton $w={30} aria-label="Volume"><VolumeIcon /></TrayButton>
          <TrayButton $w={50} $size={14}>ENG</TrayButton>
          <Clock>06:50 PM<br />13-12-2024</Clock>
          <TrayButton $w={65} aria-label="Notifications">
            <NotificationIcon />
            <Badge $right={16}>1</Badge>
          </TrayButton>
          <ShowDesktop aria-label="Show desktop" />
        </Tray>
      </Taskbar>
    </Screen>
  );
}
